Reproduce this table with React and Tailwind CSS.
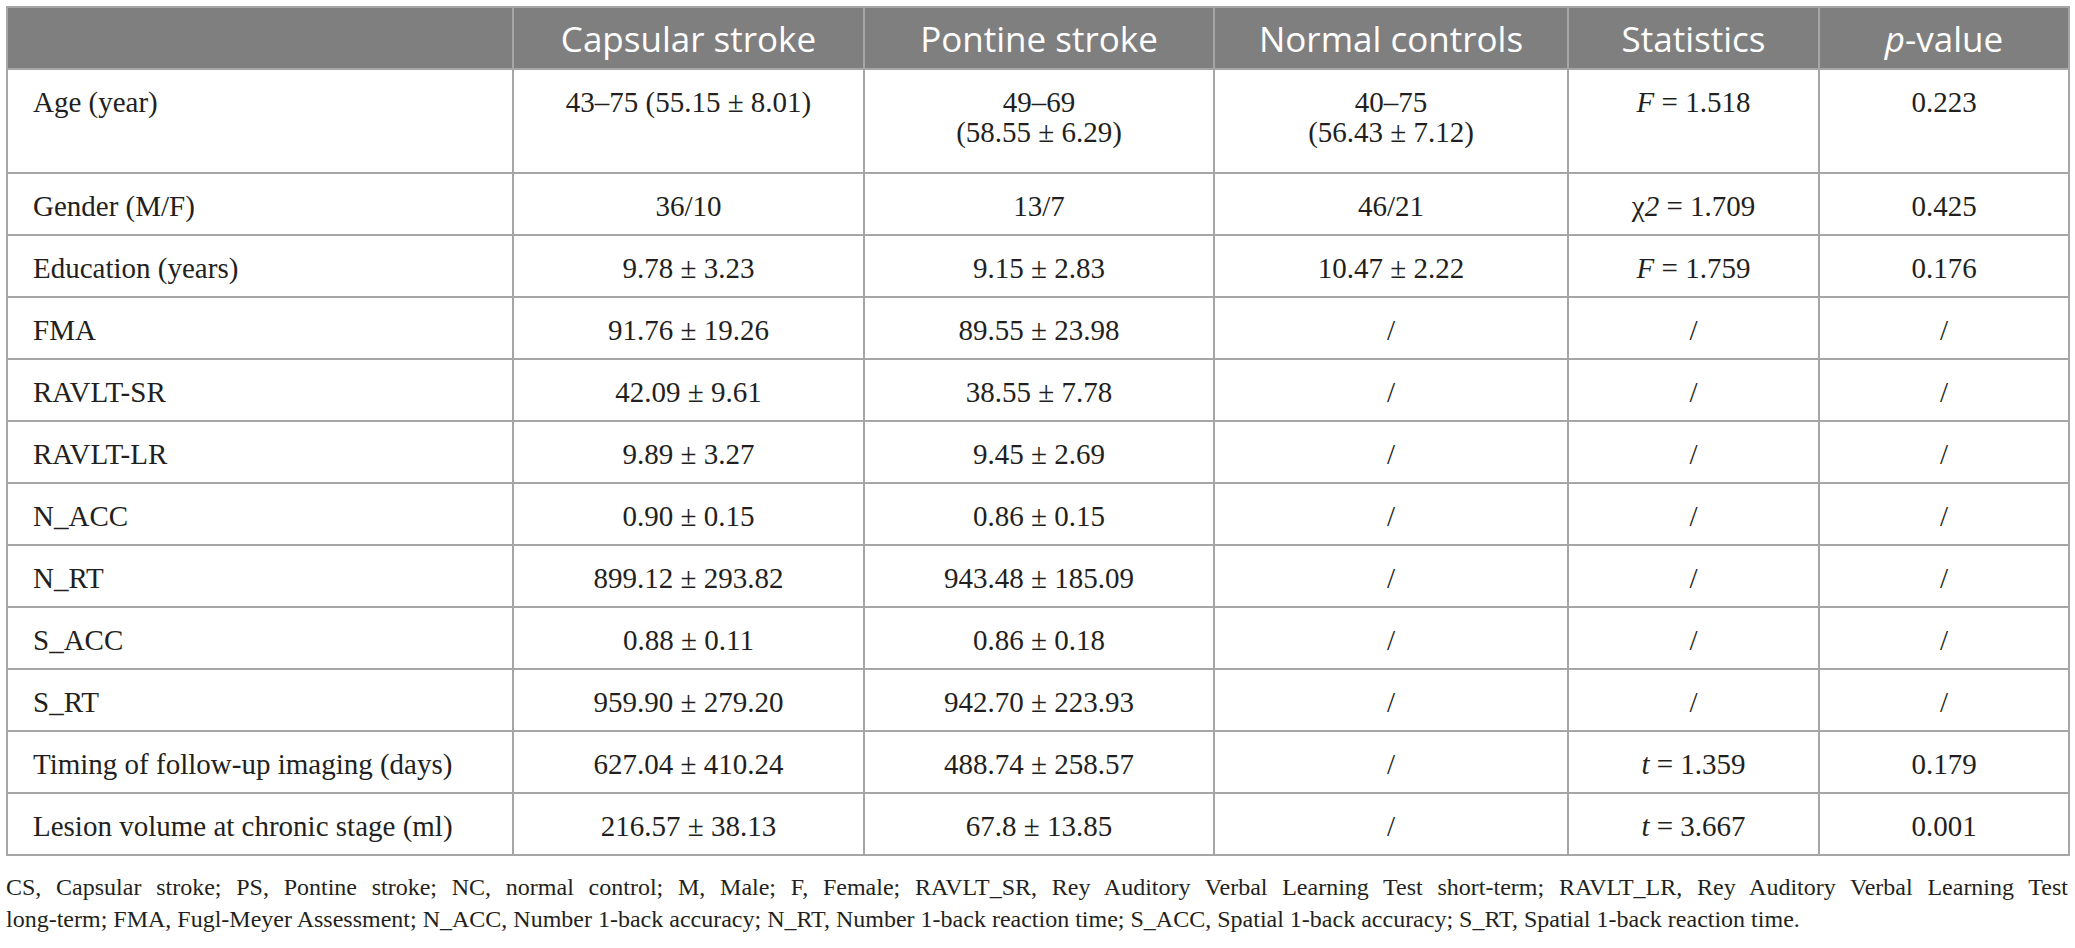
import React from 'react'

const serif = { fontFamily: '"Liberation Serif", "Times New Roman", serif' }
const sans = { fontFamily: '"Open Sans", "Noto Sans", sans-serif' }

const HEAD = ['', 'Capsular stroke', 'Pontine stroke', 'Normal controls', 'Statistics']

const ROWS = [
  { label: 'Age (year)', cs: '43–75 (55.15 ± 8.01)', ps: ['49–69', '(58.55 ± 6.29)'], nc: ['40–75', '(56.43 ± 7.12)'], stat: <><i>F</i> = 1.518</>, p: '0.223', tall: true },
  { label: 'Gender (M/F)', cs: '36/10', ps: '13/7', nc: '46/21', stat: <>χ<i>2</i> = 1.709</>, p: '0.425' },
  { label: 'Education (years)', cs: '9.78 ± 3.23', ps: '9.15 ± 2.83', nc: '10.47 ± 2.22', stat: <><i>F</i> = 1.759</>, p: '0.176' },
  { label: 'FMA', cs: '91.76 ± 19.26', ps: '89.55 ± 23.98', nc: '/', stat: '/', p: '/' },
  { label: 'RAVLT-SR', cs: '42.09 ± 9.61', ps: '38.55 ± 7.78', nc: '/', stat: '/', p: '/' },
  { label: 'RAVLT-LR', cs: '9.89 ± 3.27', ps: '9.45 ± 2.69', nc: '/', stat: '/', p: '/' },
  { label: 'N_ACC', cs: '0.90 ± 0.15', ps: '0.86 ± 0.15', nc: '/', stat: '/', p: '/' },
  { label: 'N_RT', cs: '899.12 ± 293.82', ps: '943.48 ± 185.09', nc: '/', stat: '/', p: '/' },
  { label: 'S_ACC', cs: '0.88 ± 0.11', ps: '0.86 ± 0.18', nc: '/', stat: '/', p: '/' },
  { label: 'S_RT', cs: '959.90 ± 279.20', ps: '942.70 ± 223.93', nc: '/', stat: '/', p: '/' },
  { label: 'Timing of follow-up imaging (days)', cs: '627.04 ± 410.24', ps: '488.74 ± 258.57', nc: '/', stat: <><i>t</i> = 1.359</>, p: '0.179' },
  { label: 'Lesion volume at chronic stage (ml)', cs: '216.57 ± 38.13', ps: '67.8 ± 13.85', nc: '/', stat: <><i>t</i> = 3.667</>, p: '0.001' },
]

function Lines({ v }) {
  if (Array.isArray(v)) return <>{v[0]}<br />{v[1]}</>
  return v
}

export default function App() {
  return (
    <div className="bg-white w-[2075px] h-[948px] pl-[6px] pt-[6px] text-[#231f20]">
      <table className="border-collapse table-fixed border-2 border-[#a6a6a6]" style={serif}>
        <colgroup>
          <col className="w-[506px]" />
          <col className="w-[351px]" />
          <col className="w-[350px]" />
          <col className="w-[354px]" />
          <col className="w-[251px]" />
          <col className="w-[250px]" />
        </colgroup>
        <thead>
          <tr className="h-[62px] bg-[#7f7f7f] text-white">
            {HEAD.map((h, i) => (
              <th key={i} className="border-2 border-[#a6a6a6] font-normal text-[35px] leading-none text-center align-middle" style={sans}>
                {h}
              </th>
            ))}
            <th className="border-2 border-[#a6a6a6] font-normal text-[35px] leading-none text-center align-middle" style={sans}>
              <i>p</i>-value
            </th>
          </tr>
        </thead>
        <tbody className="text-[29px] leading-[30px]">
          {ROWS.map((r, i) => (
            <tr key={i} className={r.tall ? 'h-[104px]' : 'h-[62px]'}>
              <td className="border-2 border-[#a6a6a6] align-top pt-[17px] pl-[25px] text-left">{r.label}</td>
              <td className="border-2 border-[#a6a6a6] align-top pt-[17px] text-center"><Lines v={r.cs} /></td>
              <td className="border-2 border-[#a6a6a6] align-top pt-[17px] text-center"><Lines v={r.ps} /></td>
              <td className="border-2 border-[#a6a6a6] align-top pt-[17px] text-center"><Lines v={r.nc} /></td>
              <td className="border-2 border-[#a6a6a6] align-top pt-[17px] text-center">{r.stat}</td>
              <td className="border-2 border-[#a6a6a6] align-top pt-[17px] text-center">{r.p}</td>
            </tr>
          ))}
        </tbody>
      </table>
      <div className="mt-[15px] w-[2062px] text-[24px] leading-[32px]" style={serif}>
        <p className="text-justify [text-align-last:justify]">
          CS, Capsular stroke; PS, Pontine stroke; NC, normal control; M, Male; F, Female; RAVLT_SR, Rey Auditory Verbal Learning Test short-term; RAVLT_LR, Rey Auditory Verbal Learning Test
        </p>
        <p className="whitespace-nowrap">
          long-term; FMA, Fugl-Meyer Assessment; N_ACC, Number 1-back accuracy; N_RT, Number 1-back reaction time; S_ACC, Spatial 1-back accuracy; S_RT, Spatial 1-back reaction time.
        </p>
      </div>
    </div>
  )
}
